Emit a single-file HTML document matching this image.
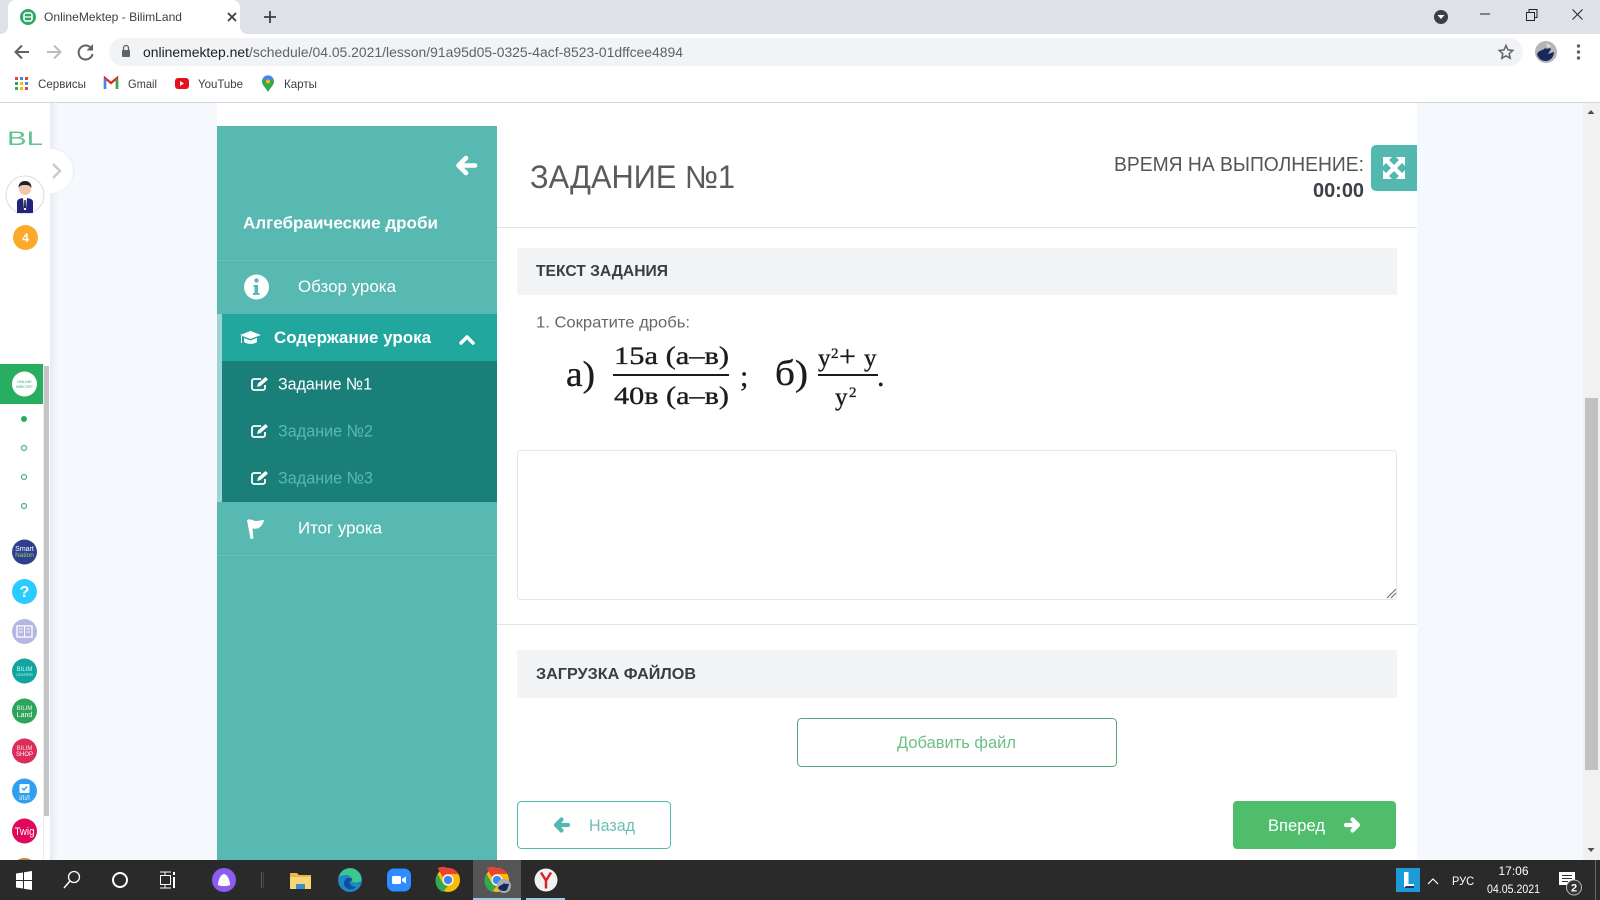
<!DOCTYPE html>
<html lang="ru">
<head>
<meta charset="utf-8">
<title>OnlineMektep - BilimLand</title>
<style>
html,body{margin:0;padding:0;width:1600px;height:900px;overflow:hidden;background:#fff}
svg{display:block;position:absolute;left:0;top:0}
text{font-family:"Liberation Sans","DejaVu Sans",sans-serif}
.s{font-family:"Liberation Serif","DejaVu Serif",serif;fill:#1c1c1c;stroke:#1c1c1c;stroke-width:.35px}
</style>
</head>
<body>
<svg width="1600" height="900" viewBox="0 0 1600 900" xmlns="http://www.w3.org/2000/svg">
<defs>
<linearGradient id="sh" x1="0" x2="1" y1="0" y2="0"><stop offset="0" stop-color="#e8ecf0"/><stop offset="1" stop-color="#f5f8fc"/></linearGradient>
</defs>
<!-- Browser chrome -->
<rect width="1600" height="34" fill="#dee1e6"/>
<path d="M0 34h0c5 0 8-3 8-8V8c0-5 3-8 8-8h216c5 0 8 3 8 8v18c0 5 3 8 8 8z" fill="#fff"/>
<rect y="34" width="1600" height="68" fill="#fff"/>
<rect y="102" width="1600" height="1" fill="#d6d6d6"/>
<circle cx="28" cy="17" r="8" fill="#2fa866"/>
<rect x="24" y="13" width="8" height="8" rx="2" fill="none" stroke="#fff" stroke-width="1.5"/><path d="M24 17h8" stroke="#fff" stroke-width="1.3"/>
<text x="44" y="21" font-size="12" fill="#3c4043" textLength="138" lengthAdjust="spacingAndGlyphs">OnlineMektep - BilimLand</text>
<path d="M228 13l8 8M236 13l-8 8" stroke="#3c4043" stroke-width="1.8"/>
<path d="M264 17h12M270 11v12" stroke="#3c4043" stroke-width="1.8"/>
<circle cx="1441" cy="17" r="7" fill="#3c4043"/><path d="M1437.500 15h7l-3.500 4z" fill="#fff"/>
<path d="M1480 14h10" stroke="#222" stroke-width="1"/>
<rect x="1526.500" y="12.500" width="8" height="8" fill="none" stroke="#222"/><path d="M1529 12v-2.500h8v8h-2.500" fill="none" stroke="#222"/>
<path d="M1572.500 9.500l10 10M1582.500 9.500l-10 10" stroke="#222" stroke-width="1"/>
<path d="M29 52H16M22 45.500L15.500 52l6.500 6.500" fill="none" stroke="#5f6368" stroke-width="2"/>
<path d="M47 52h13M54 45.500l6.500 6.500-6.500 6.500" fill="none" stroke="#babcbe" stroke-width="2"/>
<path d="M91 48a7 7 0 1 0 1.500 6" fill="none" stroke="#5f6368" stroke-width="2"/><path d="M93 44v6.500h-6.500z" fill="#5f6368"/>
<rect x="109" y="38" width="1414" height="28" rx="14" fill="#f1f3f4"/>
<rect x="122" y="50" width="8" height="7" rx="1" fill="#5f6368"/><path d="M123.500 50v-2a2.500 2.500 0 0 1 5 0v2" fill="none" stroke="#5f6368" stroke-width="1.300"/>
<text x="143" y="57" font-size="13.500" fill="#202124" textLength="106" lengthAdjust="spacingAndGlyphs">onlinemektep.net</text>
<text x="249" y="57" font-size="13.500" fill="#5f6368" textLength="434" lengthAdjust="spacingAndGlyphs">/schedule/04.05.2021/lesson/91a95d05-0325-4acf-8523-01dffcee4894</text>
<path d="M1506 45.500l2 4.400 4.800.5-3.600 3.200 1 4.700-4.200-2.400-4.200 2.400 1-4.700-3.600-3.200 4.800-.5z" fill="none" stroke="#5f6368" stroke-width="1.500"/>
<circle cx="1546" cy="52" r="11" fill="#b5b5b8"/><path d="M1537 54c3-5 6-3 8-6 2 2 4-1 6 1l-3 5 6-2c0 5-4 9-8 9-5 0-8-3-9-7z" fill="#16285c"/><path d="M1546 43l5 3-3 2z" fill="#e8e2d2"/>
<circle cx="1578.500" cy="46" r="1.700" fill="#5f6368"/><circle cx="1578.500" cy="52" r="1.700" fill="#5f6368"/><circle cx="1578.500" cy="58" r="1.700" fill="#5f6368"/>
<!-- bookmarks -->
<g>
<rect x="15" y="77" width="3" height="3" fill="#e8453c"/><rect x="20" y="77" width="3" height="3" fill="#4285f4"/><rect x="25" y="77" width="3" height="3" fill="#ea4335"/>
<rect x="15" y="82" width="3" height="3" fill="#34a853"/><rect x="20" y="82" width="3" height="3" fill="#fbbc05"/><rect x="25" y="82" width="3" height="3" fill="#4285f4"/>
<rect x="15" y="87" width="3" height="3" fill="#34a853"/><rect x="20" y="87" width="3" height="3" fill="#fbbc05"/><rect x="25" y="87" width="3" height="3" fill="#ea4335"/>
</g>
<text x="38" y="88" font-size="12" fill="#3c4043" textLength="48" lengthAdjust="spacingAndGlyphs">Сервисы</text>
<path d="M105 89V78l6 5 6-5v11" fill="none" stroke="#d93025" stroke-width="2.400"/><path d="M105 79v10" stroke="#4285f4" stroke-width="2.400"/><path d="M117 79v10" stroke="#34a853" stroke-width="2.400"/>
<text x="128" y="88" font-size="12" fill="#3c4043" textLength="29" lengthAdjust="spacingAndGlyphs">Gmail</text>
<rect x="175" y="78" width="14" height="11" rx="3" fill="#e5101c"/><path d="M180 81v5l4-2.500z" fill="#fff"/>
<text x="198" y="88" font-size="12" fill="#3c4043" textLength="45" lengthAdjust="spacingAndGlyphs">YouTube</text>
<path d="M268 92c-3-5-6-7-6-10.500a6 6 0 0 1 12 0c0 3.500-3 5.500-6 10.500z" fill="#34a853"/><path d="M263 78a6 6 0 0 1 10 0l-5 5z" fill="#4285f4"/><circle cx="268" cy="81.500" r="2" fill="#fbbc05"/>
<text x="284" y="88" font-size="12" fill="#3c4043" textLength="33" lengthAdjust="spacingAndGlyphs">Карты</text>

<!-- Page -->
<rect y="103" width="1600" height="757" fill="#fff"/>
<rect x="50" y="103" width="167" height="757" fill="#f5f8fc"/>
<rect x="1417" y="103" width="166" height="757" fill="#f5f8fc"/>
<rect x="50" y="103" width="8" height="757" fill="url(#sh)"/>
<rect x="1583" y="103" width="17" height="757" fill="#f1f1f1"/>
<rect x="1585" y="398" width="13" height="372" fill="#c1c1c1"/>
<path d="M1587.500 114l3.500-4 3.500 4z" fill="#505050"/><path d="M1587.500 848l3.500 4 3.500-4z" fill="#505050"/>

<!-- collapse tab, clipped by the rail -->
<circle cx="51" cy="171" r="22.500" fill="#fff" stroke="#eceff2"/>
<!-- left rail -->
<rect x="0" y="103" width="50" height="757" fill="#fff"/>
<rect x="44" y="366" width="5" height="450" fill="#c4c4c4"/>
<rect x="43" y="364" width="1" height="496" fill="#ececec"/>
<text x="7" y="145" font-size="19" fill="#62c291" textLength="36" lengthAdjust="spacingAndGlyphs">BL</text>
<rect x="48" y="152" width="4" height="38" fill="#fff"/>
<path d="M53 164l7 7-7 7" fill="none" stroke="#cbcbcb" stroke-width="2.500"/>
<circle cx="25" cy="195" r="19" fill="#fff" stroke="#dcdcdc"/>
<path d="M17 213v-11c0-3 4-4 8-4s8 1 8 4v11z" fill="#23237f"/><path d="M23 198h4l-1 12h-2z" fill="#fff"/><path d="M24.300 200h1.400l.3 8h-2z" fill="#222"/>
<circle cx="25" cy="189" r="6" fill="#f0c8b0"/><path d="M18.500 188c0-5 3-7 6.500-7s6.500 2 6.500 7c-2-3-4-3-6.500-3s-5 0-6.500 3z" fill="#222"/>
<circle cx="25.500" cy="237.500" r="12.500" fill="#fbaa2a"/><text x="25.500" y="242" font-size="12" font-weight="bold" fill="#fff" text-anchor="middle">4</text>
<rect x="0" y="364" width="43" height="40" fill="#28ae60"/>
<circle cx="24.500" cy="384" r="12.500" fill="#fff"/>
<text x="24.500" y="383" font-size="4" fill="#3aa870" text-anchor="middle">ONLINE</text><text x="24.500" y="388" font-size="4" fill="#3aa870" text-anchor="middle">MEKTEP</text>
<circle cx="24" cy="419" r="3" fill="#28a868"/>
<circle cx="24" cy="448" r="2.500" fill="none" stroke="#5aae80" stroke-width="1.200"/>
<circle cx="24" cy="477" r="2.500" fill="none" stroke="#5aae80" stroke-width="1.200"/>
<circle cx="24" cy="506" r="2.500" fill="none" stroke="#5aae80" stroke-width="1.200"/>
<circle cx="24.500" cy="552" r="12.500" fill="#2f3f8f"/><text x="24.500" y="551" font-size="7" fill="#fff" text-anchor="middle">Smart</text><text x="24.500" y="557" font-size="6.500" fill="#9fcf5a" text-anchor="middle">Nation</text>
<circle cx="24.500" cy="591.500" r="12.500" fill="#29ccff"/><text x="24.500" y="597" font-size="16" font-weight="bold" fill="#fff" text-anchor="middle">?</text>
<circle cx="24.500" cy="631.500" r="12.500" fill="#b6b6e4"/><rect x="17" y="626" width="15" height="11" fill="none" stroke="#fff" stroke-width="1.300"/><path d="M24.500 626v11M19 629h3.500M19 632h3.500M26.500 629h3.500M26.500 632h3.500" stroke="#fff"/>
<circle cx="24.500" cy="671" r="12.500" fill="#12a5a0"/><text x="24.500" y="671" font-size="6" fill="#bff" text-anchor="middle">BILIM</text><text x="24.500" y="676" font-size="4" fill="#bff" text-anchor="middle">CENTER</text>
<circle cx="24.500" cy="711" r="12.500" fill="#2ea35a"/><text x="24.500" y="710" font-size="6" fill="#dfd" text-anchor="middle">BILIM</text><text x="24.500" y="717" font-size="7" fill="#fff" text-anchor="middle">Land</text>
<circle cx="24.500" cy="751" r="12.500" fill="#dc2d5a"/><text x="24.500" y="750" font-size="6" fill="#fdd" text-anchor="middle">BILIM</text><text x="24.500" y="756" font-size="6" fill="#fff" text-anchor="middle">SHOP</text>
<circle cx="24.500" cy="791" r="12.500" fill="#2f9ff0"/><rect x="19.500" y="784" width="10" height="9" rx="1" fill="#fff"/><path d="M22 788l2 2 3-3.500" fill="none" stroke="#2f9ff0" stroke-width="1.400"/><text x="24.500" y="800" font-size="6" fill="#fff" text-anchor="middle">iЛiЛ</text>
<circle cx="24.500" cy="831" r="12.500" fill="#e0075d"/><text x="24.500" y="835" font-size="11" fill="#fff" text-anchor="middle" textLength="20" lengthAdjust="spacingAndGlyphs">Twig</text>
<circle cx="24.500" cy="871" r="13" fill="#c08a3a"/>

<!-- lesson sidebar -->
<rect x="217" y="126" width="280" height="734" fill="#58b9b2"/>
<rect x="217" y="260" width="280" height="1" fill="#68c0b9"/>
<rect x="217" y="555" width="280" height="1" fill="#68c0b9"/>
<rect x="217" y="314" width="5" height="188" fill="#9ed3d3"/>
<rect x="222" y="314" width="275" height="47" fill="#22a79e"/>
<rect x="222" y="361" width="275" height="141" fill="#1a7f78"/>
<path d="M475 165.500h-14M466 158l-7.500 7.500 7.500 7.500" fill="none" stroke="#fff" stroke-width="4.600" stroke-linecap="round" stroke-linejoin="round"/>
<text x="243" y="228.500" font-size="17" font-weight="bold" fill="#fff" textLength="195" lengthAdjust="spacingAndGlyphs">Алгебраические дроби</text>
<circle cx="256.500" cy="287" r="12.500" fill="#fff"/>
<circle cx="256.500" cy="280.500" r="2.200" fill="#58b9b2"/><path d="M253.500 285h4.500v8h1.500v2h-6.500v-2h1.500v-6h-1z" fill="#58b9b2"/>
<text x="298" y="292" font-size="17" fill="#fff" textLength="98" lengthAdjust="spacingAndGlyphs">Обзор урока</text>
<path d="M240 335l10.500-4 10.500 4-10.500 4z" fill="#fff"/><path d="M244 338v4c3 2.500 10 2.500 13 0v-4l-6.500 2.500z" fill="#fff"/><path d="M241.500 336v7" stroke="#fff"/>
<text x="274" y="343" font-size="17" font-weight="bold" fill="#fff" textLength="157" lengthAdjust="spacingAndGlyphs">Содержание урока</text>
<path d="M461 343l6-6 6 6" fill="none" stroke="#fff" stroke-width="3.500" stroke-linecap="round" stroke-linejoin="round"/>
<g transform="translate(2,0)"><path d="M263 385v3a2 2 0 0 1-2 2h-9a2 2 0 0 1-2-2v-7a2 2 0 0 1 2-2h7" fill="none" stroke="#fff" stroke-width="1.800"/><path d="M255 387l1-3.500 7.500-6.500 2.500 2.500-7.500 6.500z" fill="#fff"/></g>
<g transform="translate(2,47)"><path d="M263 385v3a2 2 0 0 1-2 2h-9a2 2 0 0 1-2-2v-7a2 2 0 0 1 2-2h7" fill="none" stroke="#fff" stroke-width="1.800"/><path d="M255 387l1-3.500 7.500-6.500 2.500 2.500-7.500 6.500z" fill="#fff"/></g>
<g transform="translate(2,94)"><path d="M263 385v3a2 2 0 0 1-2 2h-9a2 2 0 0 1-2-2v-7a2 2 0 0 1 2-2h7" fill="none" stroke="#fff" stroke-width="1.800"/><path d="M255 387l1-3.500 7.500-6.500 2.500 2.500-7.500 6.500z" fill="#fff"/></g>
<text x="278" y="389.500" font-size="17" fill="#fff" textLength="94" lengthAdjust="spacingAndGlyphs">Задание №1</text>
<text x="278" y="436.500" font-size="17" fill="#58b9b2" textLength="95" lengthAdjust="spacingAndGlyphs">Задание №2</text>
<text x="278" y="483.500" font-size="17" fill="#58b9b2" textLength="95" lengthAdjust="spacingAndGlyphs">Задание №3</text>
<path d="M247 520c4-2 6 1 9 1s5-1 8-1c-1 5-4 8-7 8.500-2 .500-3.500 0-4.500 0l1 10-3 .500z" fill="#fff"/>
<text x="298" y="533.500" font-size="17" fill="#fff" textLength="84" lengthAdjust="spacingAndGlyphs">Итог урока</text>

<!-- main -->
<text x="530" y="188" font-size="32" fill="#5a5a5a" textLength="205" lengthAdjust="spacingAndGlyphs">ЗАДАНИЕ №1</text>
<text x="1114" y="171" font-size="20.500" fill="#555" textLength="250" lengthAdjust="spacingAndGlyphs">ВРЕМЯ НА ВЫПОЛНЕНИЕ:</text>
<text x="1313" y="197" font-size="20" font-weight="bold" fill="#3d4048" textLength="51" lengthAdjust="spacingAndGlyphs">00:00</text>
<path d="M1417 145h-41a5 5 0 0 0-5 5v36a5 5 0 0 0 5 5h41z" fill="#52b8b0"/>
<g fill="#fff"><path d="M1383 157h9l-3 3 5 5 5-5-3-3h9v9l-3-3-5 5 5 5 3-3v9h-9l3-3-5-5-5 5 3 3h-9v-9l3 3 5-5-5-5-3 3z"/></g>
<rect x="497" y="227" width="920" height="1" fill="#e4e4e4"/>

<rect x="517" y="248" width="880" height="47" fill="#f3f4f6"/>
<text x="536" y="276" font-size="16" font-weight="bold" fill="#3a3d42" textLength="132" lengthAdjust="spacingAndGlyphs">ТЕКСТ ЗАДАНИЯ</text>
<text x="536" y="327.500" font-size="16" fill="#666" textLength="154" lengthAdjust="spacingAndGlyphs">1. Сократите дробь:</text>

<text class="s" x="566" y="386" font-size="36" textLength="29" lengthAdjust="spacingAndGlyphs">а)</text>
<text class="s" x="614" y="364" font-size="25" textLength="115" lengthAdjust="spacingAndGlyphs">15а (а–в)</text>
<rect x="613" y="374" width="116" height="2" fill="#1c1c1c"/>
<text class="s" x="614" y="404" font-size="25" textLength="115" lengthAdjust="spacingAndGlyphs">40в (а–в)</text>
<text class="s" x="740" y="386" font-size="30">;</text>
<text class="s" x="775" y="385" font-size="36" textLength="33" lengthAdjust="spacingAndGlyphs">б)</text>
<text class="s" x="818" y="366" font-size="25">у</text>
<text class="s" x="831" y="358" font-size="15">2</text>
<text class="s" x="839" y="366" font-size="30">+</text>
<text class="s" x="864" y="366" font-size="25">у</text>
<rect x="818" y="374" width="60" height="2" fill="#1c1c1c"/>
<text class="s" x="835" y="405" font-size="25">у</text>
<text class="s" x="849" y="397" font-size="15">2</text>
<text class="s" x="877" y="386" font-size="30">.</text>

<rect x="517.500" y="450.500" width="879" height="149" rx="3" fill="#fff" stroke="#e6e6e6"/>
<path d="M1387 598l9-9M1391 598l5-5" stroke="#666" stroke-width="1"/>
<rect x="497" y="624" width="920" height="1" fill="#e4e4e4"/>
<rect x="517" y="650" width="880" height="48" fill="#f3f4f6"/>
<text x="536" y="679" font-size="16" font-weight="bold" fill="#3a3d42" textLength="160" lengthAdjust="spacingAndGlyphs">ЗАГРУЗКА ФАЙЛОВ</text>

<rect x="797.500" y="718.500" width="319" height="48" rx="4" fill="#fff" stroke="#55a878"/>
<text x="897" y="748" font-size="17" fill="#6fbf85" textLength="119" lengthAdjust="spacingAndGlyphs">Добавить файл</text>
<rect x="517.500" y="801.500" width="153" height="47" rx="4" fill="#fff" stroke="#52b8b0"/>
<path d="M568 825h-11M561.500 819.500l-5.500 5.500 5.500 5.500" fill="none" stroke="#52b8b0" stroke-width="4.200" stroke-linecap="round" stroke-linejoin="round"/>
<text x="589" y="831" font-size="17" fill="#6bbdb6" textLength="46" lengthAdjust="spacingAndGlyphs">Назад</text>
<rect x="1233" y="801" width="163" height="48" rx="4" fill="#4fbd6b"/>
<text x="1268" y="831" font-size="17" fill="#fff" textLength="57" lengthAdjust="spacingAndGlyphs">Вперед</text>
<path d="M1346 825h11M1352.500 819.500l5.500 5.500-5.500 5.500" fill="none" stroke="#fff" stroke-width="4.200" stroke-linecap="round" stroke-linejoin="round"/>

<!-- Taskbar -->
<rect y="860" width="1600" height="40" fill="#2a2a2b"/>
<path d="M16 873.500l7-1v7.500h-7zM24 872.300l8-1.300v9h-8zM16 881h7v7.500l-7-1zM24 881h8v9l-8-1.300z" fill="#fff"/>
<circle cx="74" cy="877" r="5.500" fill="none" stroke="#fff" stroke-width="1.300"/><path d="M70 881l-6 7" stroke="#fff" stroke-width="1.500"/>
<circle cx="120" cy="880" r="7" fill="none" stroke="#fff" stroke-width="2"/>
<path d="M160 872h11M160 888h11M165 872v3M165 885v3" stroke="#fff" stroke-width="1"/><rect x="160.500" y="875.500" width="10" height="9" fill="none" stroke="#fff"/><rect x="173" y="872" width="2" height="3" fill="#fff"/><rect x="173" y="877" width="2" height="11" fill="#fff"/>
<circle cx="224" cy="880" r="12" fill="#8a5cf0"/><path d="M218 885c0-5 3-11 6-11s6 6 6 11c-3 1.500-9 1.500-12 0z" fill="#fff"/>
<rect x="261" y="872" width="1" height="16" fill="#5c5c5c"/><rect x="263" y="872" width="1" height="16" fill="#444"/>
<path d="M290 873h7l2 2h12v14h-21z" fill="#e8b84a"/><rect x="290" y="877" width="21" height="12" fill="#f7d774"/><rect x="296" y="884" width="9" height="5" fill="#3b8fd0"/>
<circle cx="350" cy="880" r="12" fill="#1e88c7"/><path d="M339 877c2-8 10-10 15-8 5 2 8 7 7 12-3 2-8 2-10 0 2-3-2-7-6-6-3 .5-5 1-6 2z" fill="#3ec78a"/><path d="M344 883c0-4 4-6 7-5 2 .800 1 3 0 3-3 0-1 6 5 6-3 4-12 3-12-4z" fill="#0f4f9c"/>
<rect x="387" y="868.500" width="24" height="23" rx="7" fill="#2d8cff"/><rect x="392" y="876" width="9" height="8" rx="1.500" fill="#fff"/><path d="M402 879l4-2.500v7l-4-2.500z" fill="#fff"/>
<g>
<circle cx="448" cy="880" r="12" fill="#fbbc05"/>
<path d="M448 868a12 12 0 0 1 10.400 6H448a6 6 0 0 0-5.200 3l-5.200-9A12 12 0 0 1 448 868z" fill="#ea4335"/>
<path d="M437.600 874l5.200 9a6 6 0 0 0 5.200 3l-5.200 5.900A12 12 0 0 1 437.600 874z" fill="#34a853"/>
<circle cx="448" cy="880" r="5.500" fill="#fff"/><circle cx="448" cy="880" r="4.300" fill="#4285f4"/>
</g>
<rect x="473" y="860" width="48" height="40" fill="#555"/>
<rect x="473" y="898" width="48" height="2" fill="#9cc8e8"/>
<circle cx="497" cy="880" r="12" fill="#fbbc05"/>
<path d="M497 868a12 12 0 0 1 10.400 6H497a6 6 0 0 0-5.200 3l-5.200-9A12 12 0 0 1 497 868z" fill="#ea4335"/>
<path d="M486.600 874l5.200 9a6 6 0 0 0 5.200 3l-5.200 5.900A12 12 0 0 1 486.600 874z" fill="#34a853"/>
<circle cx="497" cy="880" r="5.500" fill="#fff"/><circle cx="497" cy="880" r="4.300" fill="#4285f4"/>
<circle cx="504" cy="886" r="7" fill="#a9aab0"/><path d="M498 888c2-4 4-2 6-5 2 2 3 0 5 1l-2 6c-3 2-7 1-9-2z" fill="#16285c"/>
<rect x="526" y="898" width="39" height="2" fill="#9cc8e8"/>
<circle cx="546" cy="880" r="11.500" fill="#f2f2f2"/><path d="M541 872.500l5 8 5-8M546 880.500v8" fill="none" stroke="#d8232a" stroke-width="2.500"/>

<rect x="1396" y="868" width="24" height="24" fill="#1c9bd8"/>
<path d="M1404 872h4.500v12h5.500v4h-10z" fill="#fff"/><path d="M1404 888l2-2h8v2z" fill="#143a72"/>
<path d="M1428 884l5-5 5 5" fill="none" stroke="#fff" stroke-width="1.200"/>
<text x="1452" y="885" font-size="12" fill="#fff" textLength="22" lengthAdjust="spacingAndGlyphs">РУС</text>
<text x="1513.500" y="875" font-size="12" fill="#fff" text-anchor="middle">17:06</text>
<text x="1487" y="893" font-size="12" fill="#fff" textLength="53" lengthAdjust="spacingAndGlyphs">04.05.2021</text>
<path d="M1559 872h16v13h-16z" fill="#fff"/><path d="M1562 875.500h10M1562 878.500h10M1562 881.500h6" stroke="#333" stroke-width="1"/>
<circle cx="1574" cy="887.500" r="7.500" fill="#333" stroke="#bbb" stroke-width="1"/><text x="1574" y="891.500" font-size="11" font-weight="bold" fill="#fff" text-anchor="middle">2</text>
<rect x="1595" y="860" width="1" height="40" fill="#666"/>
</svg>
</body>
</html>
